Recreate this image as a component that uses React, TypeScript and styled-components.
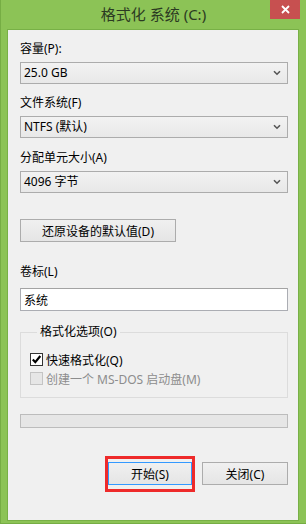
import React from 'react'
import styled, { createGlobalStyle } from 'styled-components'

const GlobalStyle = createGlobalStyle`
  html, body {
    margin: 0;
    padding: 0;
    background: #8cc356;
  }
  body {
    font-family: "Noto Sans", "Noto Sans CJK SC", sans-serif;
    font-size: 12px;
    color: #000;
  }
`

const Window = styled.div`
  width: 306px;
  height: 524px;
  box-sizing: border-box;
  background: #8cc356;
  border-left: 1px solid #76ad44;
  border-bottom: 1px solid #76ad44;
  padding: 0 7px 2px 6px;
  display: flex;
  flex-direction: column;
`

const TitleBar = styled.div`
  height: 29px;
  display: flex;
  align-items: center;
  justify-content: center;
  position: relative;
  margin: 0 -7px 0 -6px;
`

const Title = styled.div`
  font-size: 15px;
  color: #2b3a22;
  line-height: 20px;
  margin-top: -1px;
  font-family: "Noto Sans", "Noto Sans CJK SC", sans-serif;
`

const CloseButton = styled.div`
  position: absolute;
  top: 0;
  right: 6px;
  width: 30px;
  height: 19px;
  background: #c75050;
  display: flex;
  align-items: center;
  justify-content: center;
`

const Client = styled.div`
  flex: 1;
  background: #f0f0f0;
  border: 1px solid #78b046;
  padding: 11px 10px 0 12px;
  display: flex;
  flex-direction: column;
`

const Label = styled.div<{ $gap?: number }>`
  line-height: 16px;
  height: 16px;
  margin-top: ${(p) => p.$gap ?? 0}px;
  margin-bottom: 5px;
  white-space: nowrap;
`

const Select = styled.div`
  height: 22px;
  box-sizing: border-box;
  border: 1px solid #acacac;
  background: linear-gradient(#f2f2f2, #e8e8e8);
  display: flex;
  align-items: center;
  justify-content: space-between;
  padding: 0 6px 0 3px;
  line-height: 16px;
`

const Input = styled.div`
  height: 23px;
  box-sizing: border-box;
  border: 1px solid #abadb3;
  border-top-color: #a3a3a3;
  background: #fff;
  display: flex;
  align-items: center;
  padding: 0 3px;
`

const Button = styled.div<{ $width: number; $focused?: boolean }>`
  width: ${(p) => p.$width}px;
  height: 23px;
  box-sizing: border-box;
  border: 1px solid ${(p) => (p.$focused ? '#3399ff' : '#acacac')};
  background: linear-gradient(#f0f0f0, #e5e5e5);
  display: flex;
  align-items: center;
  justify-content: center;
  white-space: nowrap;
`

const ResetRow = styled.div`
  margin-top: 26px;
  display: flex;
`

const Group = styled.fieldset`
  margin: 13px 0 0 0;
  padding: 10px 0 9px 9px;
  border: 1px solid #dcdcdc;
  display: flex;
  flex-direction: column;
`

const Legend = styled.legend`
  margin-left: 7px;
  padding: 0 3px;
  line-height: 16px;
`

const CheckRow = styled.div<{ $disabled?: boolean }>`
  height: 19px;
  display: flex;
  align-items: center;
  gap: 3px;
  color: ${(p) => (p.$disabled ? '#8d8d8d' : '#000')};
`

const Box = styled.div<{ $disabled?: boolean }>`
  width: 13px;
  height: 13px;
  box-sizing: border-box;
  border: 1px solid ${(p) => (p.$disabled ? '#c4c4c4' : '#333')};
  background: ${(p) => (p.$disabled ? '#e6e6e6' : '#fff')};
  display: flex;
  align-items: center;
  justify-content: center;
`

const Progress = styled.div`
  margin-top: 16px;
  height: 14px;
  box-sizing: border-box;
  border: 1px solid #bcbcbc;
  background: #e6e6e6;
`

const Footer = styled.div`
  margin-top: 34px;
  display: flex;
  justify-content: flex-end;
  align-items: flex-start;
  gap: 7px;
`

const Highlight = styled.div`
  border: 3px solid #ee2a2a;
  padding: 3px 0 4px;
  margin-top: -6px;
  display: flex;
`

const Chevron = () => (
  <svg width="8" height="6" viewBox="0 0 8 6">
    <path d="M1 1.2 L4 4.2 L7 1.2" fill="none" stroke="#555" strokeWidth="1.6" />
  </svg>
)

const Dropdown = ({ value }: { value: string }) => (
  <Select>
    <span>{value}</span>
    <Chevron />
  </Select>
)

export default function App() {
  return (
    <>
      <GlobalStyle />
      <Window>
        <TitleBar>
          <Title>格式化 系统 (C:)</Title>
          <CloseButton>
            <svg width="9" height="9" viewBox="0 0 9 9">
              <path d="M1 1 L8 8 M8 1 L1 8" stroke="#fff" strokeWidth="1.8" />
            </svg>
          </CloseButton>
        </TitleBar>
        <Client>
          <Label>容量(P):</Label>
          <Dropdown value="25.0 GB" />
          <Label $gap={11}>文件系统(F)</Label>
          <Dropdown value="NTFS (默认)" />
          <Label $gap={12}>分配单元大小(A)</Label>
          <Dropdown value="4096 字节" />
          <ResetRow>
            <Button $width={156}>还原设备的默认值(D)</Button>
          </ResetRow>
          <Label $gap={22} style={{ marginBottom: 8 }}>
            卷标(L)
          </Label>
          <Input>系统</Input>
          <Group>
            <Legend>格式化选项(O)</Legend>
            <CheckRow>
              <Box>
                <svg width="11" height="11" viewBox="0 0 11 11">
                  <path d="M1.8 5.6 L4.3 8.2 L9.3 2" fill="none" stroke="#000" strokeWidth="2.2" />
                </svg>
              </Box>
              快速格式化(Q)
            </CheckRow>
            <CheckRow $disabled>
              <Box $disabled />
              创建一个 MS-DOS 启动盘(M)
            </CheckRow>
          </Group>
          <Progress />
          <Footer>
            <Highlight>
              <Button $width={84} $focused>
                开始(S)
              </Button>
            </Highlight>
            <Button $width={86}>关闭(C)</Button>
          </Footer>
        </Client>
      </Window>
    </>
  )
}
